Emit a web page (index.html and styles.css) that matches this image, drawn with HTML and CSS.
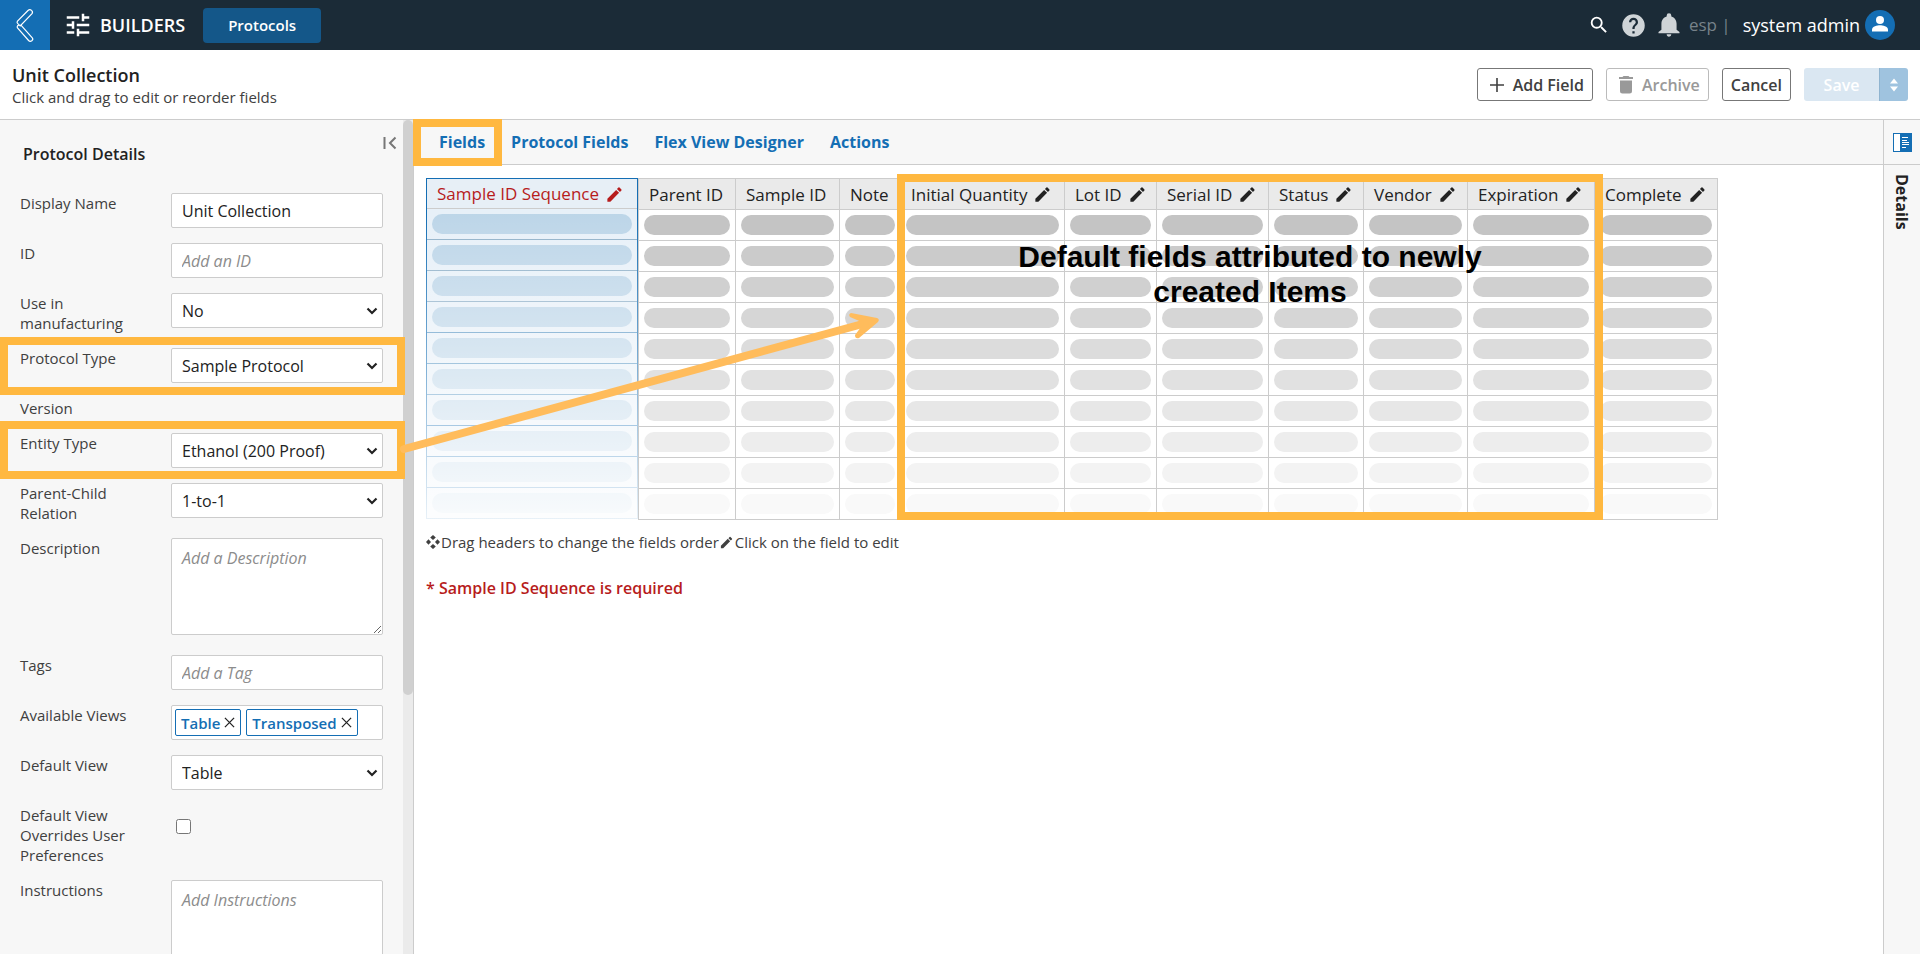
FILE: index.html
```html
<!DOCTYPE html>
<html lang="en">
<head>
<meta charset="utf-8">
<title>Builders - Unit Collection</title>
<link rel="stylesheet" href="styles.css">
</head>
<body>
<svg class="sprite" aria-hidden="true">
  <symbol id="pencil" viewBox="0 0 24 24"><path d="M3 17.25V21h3.75L17.8 9.94l-3.75-3.75L3 17.25zM20.7 7.04a1 1 0 0 0 0-1.41l-2.33-2.34a1 1 0 0 0-1.42 0l-1.83 1.83 3.75 3.75 1.83-1.83z"/></symbol>
  <symbol id="cross" viewBox="0 0 12 12"><path d="M1 1l10 10M11 1L1 11" fill="none" stroke="currentColor" stroke-width="1.4"/></symbol>
</svg>

<header class="topbar">
  <button class="back" aria-label="Back">
    <svg width="50" height="50" viewBox="0 0 50 50" fill="none" stroke="#fff" stroke-width="1.2"><path d="M28 10.500L17.500 21.200Q16.600 22.300 17.500 23.300L20.200 26 32 13.600Q33.200 11.800 31.500 10.400 29.800 8.800 28 10.500ZM20.500 24.600L32.300 37.800Q33.500 39.200 31.800 40.800 30 42 28.600 40.500L17.500 28Q16.800 27 17.500 26L19 24.500"/></svg>
  </button>
  <svg class="tune" width="30" height="30" viewBox="0 0 24 24"><path d="M3 17v2h6v-2H3zM3 5v2h10V5H3zm10 16v-2h8v-2h-8v-2h-2v6h2zM7 9v2H3v2h4v2h2V9H7zm14 4v-2H11v2h10zm-6-4h2V7h4V5h-4V3h-2v6z"/></svg>
  <h1 class="app">BUILDERS</h1>
  <button class="module">Protocols</button>
  <div class="account">
    <button class="icon" aria-label="Search"><svg width="22" height="22" viewBox="0 0 24 24" fill="#fff"><path d="M15.5 14h-.79l-.28-.27A6.470 6.470 0 0 0 16 9.500 6.500 6.500 0 1 0 9.500 16c1.610 0 3.090-.590 4.230-1.570l.27.28v.79l5 4.990L20.490 19l-4.990-5zm-6 0A4.500 4.500 0 1 1 14 9.500 4.490 4.490 0 0 1 9.500 14z"/></svg></button>
    <button class="icon help" aria-label="Help"><svg width="27" height="27" viewBox="0 0 24 24"><path d="M12 2a10 10 0 1 0 0 20 10 10 0 0 0 0-20zm1 17h-2v-2h2v2zm2.070-7.750l-.9.920C13.450 12.900 13 13.500 13 15h-2v-.5c0-1.100.450-2.100 1.170-2.830l1.240-1.260c.370-.360.590-.860.590-1.410a2 2 0 1 0-4 0H8a4 4 0 1 1 8 0c0 .880-.360 1.680-.930 2.250z"/></svg></button>
    <button class="icon bell" aria-label="Notifications"><svg width="28" height="28" viewBox="0 0 24 24"><path d="M12 22a2 2 0 0 0 2-2h-4c0 1.100.890 2 2 2zm6.500-6v-5c0-3.070-1.640-5.640-4.500-6.320V4a2 2 0 0 0-4 0v.68C7.130 5.360 5.500 7.920 5.500 11v5L3 18v1h18v-1l-2.500-2z"/></svg></button>
    <span class="tenant">esp |</span>
    <a class="user" href="#">system admin</a>
    <svg width="30" height="30" viewBox="0 0 30 30"><circle cx="15" cy="15" r="15" fill="#146eb4"/><circle cx="15" cy="10" r="4" fill="#fff"/><path d="M7 21.500v-2c0-3 5.300-4.300 8-4.300s8 1.300 8 4.300v2z" fill="#fff"/></svg>
  </div>
</header>

<section class="titlebar">
  <div>
    <h2>Unit Collection</h2>
    <p>Click and drag to edit or reorder fields</p>
  </div>
  <div class="actions">
    <button class="btn add"><svg width="14" height="14" viewBox="0 0 14 14"><path d="M7 0v14M0 7h14" stroke="currentColor" stroke-width="1.600"/></svg>Add Field</button>
    <button class="btn archive" disabled><svg width="14" height="18" viewBox="0 0 14 18" fill="currentColor"><path d="M1 4.500h12V15a2.500 2.500 0 0 1-2.500 2.500h-7A2.500 2.500 0 0 1 1 15zM0 1h3.500l1-1h5l1 1H14v2H0z"/></svg>Archive</button>
    <button class="btn">Cancel</button>
    <div class="save">
      <button class="save-main" disabled>Save</button>
      <button class="save-more" aria-label="More save options" disabled><svg width="8" height="14" viewBox="0 0 8 14" fill="#fff"><path d="M4 0.500l4 5H0zM4 13.500l-4-5h8z"/></svg></button>
    </div>
  </div>
</section>

<div class="workspace">
  <aside class="sidebar">
    <form class="details">
      <div class="details-head">
        <h3>Protocol Details</h3>
        <button type="button" class="collapse" aria-label="Collapse panel"><svg width="14" height="14" viewBox="0 0 14 14" fill="none" stroke="#777" stroke-width="2"><path d="M1.500 1v12M12.500 1.500L7 7l5.500 5.500"/></svg></button>
      </div>
      <div class="row"><label for="name">Display Name</label><input id="name" type="text" value="Unit Collection"></div>
      <div class="row"><label for="pid">ID</label><input id="pid" type="text" placeholder="Add an ID"></div>
      <div class="row"><label for="mfg">Use in manufacturing</label><select id="mfg"><option>No</option></select></div>
      <div class="row"><label for="ptype">Protocol Type</label><select id="ptype"><option>Sample Protocol</option></select></div>
      <div class="row"><span>Version</span></div>
      <div class="row"><label for="etype">Entity Type</label><select id="etype"><option>Ethanol (200 Proof)</option></select></div>
      <div class="row"><label for="rel">Parent-Child Relation</label><select id="rel"><option>1-to-1</option></select></div>
      <div class="row tall"><label for="desc">Description</label><textarea id="desc" placeholder="Add a Description"></textarea></div>
      <div class="row"><label for="tags">Tags</label><input id="tags" type="text" placeholder="Add a Tag"></div>
      <div class="row"><span>Available Views</span>
        <div class="chips">
          <button type="button" class="chip">Table<svg width="11" height="11"><use href="#cross"/></svg></button>
          <button type="button" class="chip">Transposed<svg width="11" height="11"><use href="#cross"/></svg></button>
        </div>
      </div>
      <div class="row"><label for="view">Default View</label><select id="view"><option>Table</option></select></div>
      <div class="row"><label for="over">Default View Overrides User Preferences</label><input id="over" type="checkbox"></div>
      <div class="row tall"><label for="instr">Instructions</label><textarea id="instr" placeholder="Add Instructions"></textarea></div>
    </form>
    <div class="scroll"><div class="thumb"></div></div>
  </aside>

  <main class="main">
    <nav class="tabs">
      <a href="#">Fields</a><a href="#">Protocol Fields</a><a href="#">Flex View Designer</a><a href="#">Actions</a>
    </nav>
    <div class="content">
      <div class="tables" id="tables"></div>
      <p class="hint"><svg width="14" height="14" viewBox="0 0 14 14" fill="currentColor"><path d="M7 0l2.800 2.500L7 5 4.200 2.500zM7 9l2.800 2.500L7 14l-2.800-2.500zM2.500 4.200L5 7 2.500 9.800 0 7zM11.500 4.200L14 7l-2.500 2.800L9 7z"/></svg>Drag headers to change the fields order<svg width="15" height="15"><use href="#pencil"/></svg>Click on the field to edit</p>
      <p class="error">* Sample ID Sequence is required</p>
    </div>
  </main>

  <aside class="rail">
    <button class="rail-toggle" aria-label="Toggle details"><svg width="19" height="19" viewBox="0 0 19 19"><rect x=".5" y=".5" width="18" height="18" fill="#fff" stroke="#146eb4"/><path d="M7 0h12v19H7z" fill="#146eb4"/><path d="M9 4.500h6M9 7.500h5M9 9.500h7M9 11.500h7M9 14.500h4" stroke="#fff"/></svg></button>
    <span>Details</span>
  </aside>
</div>

<div class="annotations">
  <div class="mark mark-tab"></div>
  <div class="mark mark-protocol"></div>
  <div class="mark mark-entity"></div>
  <div class="mark mark-fields">Default fields attributed to newly created Items</div>
  <svg class="arrow" width="490" height="150" viewBox="0 0 490 150"><path d="M4 139L470 12" fill="none" stroke="#ffbc5c" stroke-width="8" stroke-linecap="round"/><path d="M451 3Q448 4 450 7L464 13 455 25Q455 29 459 28L478 12Q480 9 477 8Z" fill="#ffbc5c"/></svg>
</div>

<script src="script.js"></script>
</body>
</html>
```
FILE: styles.css
```css
* { box-sizing: border-box; }
body {
  margin: 0;
  height: 100vh;
  display: flex;
  flex-direction: column;
  position: relative;
  overflow: hidden;
  background: #fff;
  color: #404040;
  font-family: "Open Sans", sans-serif;
  font-size: 15px;
  line-height: 20px;
}
h1, h2, h3, p { margin: 0; }
button, input, select, textarea { font: inherit; color: inherit; margin: 0; }
button { padding: 0; border: 0; background: none; }
svg { display: block; flex: none; }
a { text-decoration: none; }
.sprite { position: absolute; width: 0; height: 0; }

.topbar {
  flex: none;
  height: 50px;
  display: flex;
  align-items: center;
  background: #1b2b37;
  color: #fff;
}
.back { width: 50px; height: 50px; background: #146eb4; }
.tune { margin-left: 13px; fill: #fff; }
.app { margin-left: 7px; font-size: 18px; font-weight: 600; }
.module {
  margin-left: 18px;
  width: 118px;
  height: 35px;
  border-radius: 4px;
  background: #145789;
  font-weight: 600;
}
.account { margin-left: auto; padding-right: 25px; display: flex; align-items: center; font-size: 17px; }
.help, .bell { fill: #cfd4d7; }
.help { margin-left: 10px; }
.bell { margin-left: 8px; }
.tenant { margin-left: 6px; color: #77828a; }
.user { margin: 0 5px 0 12px; color: #fff; font-size: 18px; }

.titlebar {
  flex: none;
  height: 70px;
  padding: 0 12px;
  display: flex;
  align-items: center;
  justify-content: space-between;
  border-bottom: 1px solid #ccc;
}
.titlebar h2 { font-size: 18px; line-height: 24px; font-weight: 600; color: #222; }
.actions { display: flex; gap: 13px; }
.btn {
  height: 33px;
  padding: 0 8px;
  display: flex;
  align-items: center;
  border: 1px solid #777;
  border-radius: 3px;
  background: #fff;
  font-size: 16px;
  font-weight: 600;
}
.add { padding-left: 12px; gap: 9px; }
.archive { padding-left: 12px; gap: 9px; color: #999; border-color: #bbb; }
.save { display: flex; color: #fff; font-size: 16px; font-weight: 600; }
.save-main { width: 75px; height: 33px; background: #dae7f2; border-radius: 3px 0 0 3px; }
.save-more {
  width: 29px;
  display: grid;
  place-items: center;
  background: #9fc3df;
  border-left: 1px solid #8fb4d0;
  border-radius: 0 3px 3px 0;
}

.workspace { flex: 1; min-height: 0; display: flex; }
.sidebar { flex: none; width: 414px; display: flex; overflow: hidden; background: #f7f7f7; border-right: 1px solid #ccc; }
.details { flex: 1; padding: 0 20px; display: flex; flex-direction: column; gap: 15px; }
.details-head { height: 58px; flex: none; display: flex; justify-content: space-between; }
.details-head h3 { padding: 24px 0 0 3px; font-size: 16px; font-weight: 600; color: #222; }
.collapse { height: 14px; margin: 16px -14px 0 0; }
.row { flex: none; display: grid; grid-template-columns: 131px 1fr; gap: 20px; align-items: start; }
.row.tall { padding-bottom: 5px; }
.row input[type=text], .row select, .row textarea, .chips {
  width: 100%;
  height: 35px;
  padding: 0 10px;
  border: 1px solid #ccc;
  border-radius: 2px;
  background: #fff;
  color: #222;
  font-size: 16px;
}
.row select {
  appearance: none;
  background: #fff url("data:image/svg+xml,%3Csvg xmlns='http://www.w3.org/2000/svg' width='12' height='8'%3E%3Cpath d='M1.500 1.500L6 6l4.500-4.500' fill='none' stroke='%23222' stroke-width='2.200'/%3E%3C/svg%3E") no-repeat right 4px center;
}
.row textarea { display: block; height: 97px; padding: 9px 10px; }
.row ::placeholder { color: #8c8c8c; font-style: italic; opacity: 1; }
.row input[type=checkbox] { width: 15px; height: 15px; margin: 14px 0 0 5px; }
.row .chips { padding: 3px; display: flex; gap: 5px; }
.chip {
  height: 27px;
  padding: 0 5px;
  display: flex;
  align-items: center;
  gap: 4px;
  border: 1px solid #146eb4;
  border-radius: 2px;
  color: #146eb4;
  font-size: 15px;
  font-weight: 600;
}
.chip svg { color: #222; }
.scroll { width: 10px; background: #ebebeb; }
.thumb { height: 69%; border-radius: 5px; background: #d0d0d0; }

.main { flex: 1; min-width: 0; }
.tabs {
  height: 45px;
  padding-left: 25px;
  display: flex;
  align-items: center;
  gap: 26px;
  background: #f7f7f7;
  border-bottom: 1px solid #ccc;
}
.tabs a { color: #146eb4; font-size: 16px; font-weight: 700; }
.content { padding: 13px 12px; }
.tables { display: flex; align-items: flex-start; }
table { border-collapse: separate; border-spacing: 0; table-layout: fixed; }
th {
  height: 31px;
  padding: 1px 10px 0;
  border-bottom: 1px solid #ccc;
  background: #eaeaea;
  color: #222;
  font-size: 17px;
  font-weight: 400;
  text-align: left;
  white-space: nowrap;
}
.label { display: flex; align-items: center; gap: 6px; fill: currentColor; }
td { height: 31px; padding: 5px; border-bottom: 1px solid #ccc; }
.pill { height: 20px; border-radius: 10px; background: #c4c4c4; }
.fields { width: 1080px; border: solid #ccc; border-width: 1px 0 0 1px; }
.fields th, .fields td { border-right: 1px solid #ccc; }
.picked { width: 212px; position: relative; border: solid #146eb4; border-width: 1px 1px 0; }
.picked th { height: 30px; background: #e7eff6; color: #b71c1c; }
.picked td { border-color: #8fb0c8; background: #e7f0f8; }
.picked tr:nth-child(n+5) td { border-color: #5b97c4; }
.picked tr:nth-child(n+8) td { border-color: #146eb4; }
.picked .pill { background: #bcd5e8; }
.picked::after {
  content: "";
  position: absolute;
  inset: 31px -1px 0;
  background: linear-gradient(#fff0, #ffffffe6);
}
.hint { margin-top: 12px; display: flex; align-items: center; }
.hint svg { margin-right: 1px; fill: currentColor; }
.error { margin-top: 26px; color: #b71c1c; font-size: 16px; font-weight: 600; }

.rail { flex: none; width: 37px; border-left: 1px solid #ccc; background: #f7f7f7; }
.rail-toggle { width: 100%; height: 45px; display: grid; place-items: center; border-bottom: 1px solid #ccc; }
.rail span { display: block; margin: 9px 0 0 8px; writing-mode: vertical-rl; font-size: 16px; font-weight: 700; color: #222; }

.annotations { position: absolute; inset: 0; pointer-events: none; }
.mark { position: absolute; border: 8px solid #ffb840; }
.mark-tab { left: 413px; top: 119px; width: 89px; height: 47px; }
.mark-protocol { left: 0; top: 337px; width: 405px; height: 58px; }
.mark-entity { left: 0; top: 421px; width: 405px; height: 58px; }
.mark-fields {
  left: 897px;
  top: 174px;
  width: 706px;
  height: 346px;
  padding: 57px 100px 0;
  color: #000;
  font: 700 30px/35px "Liberation Sans", Arial, sans-serif;
  text-align: center;
}
.arrow { position: absolute; left: 400px; top: 310px; }
```
FILE: script.js
```js
const pencil = '<svg width="19" height="19"><use href="#pencil"/></svg>';
const shades = [196, 203, 208, 214, 220, 225, 231, 237, 243, 249];
const columns = [
  ["Parent ID", 97, false], ["Sample ID", 104, false], ["Note", 61, false],
  ["Initial Quantity", 164, true], ["Lot ID", 92, true], ["Serial ID", 112, true],
  ["Status", 95, true], ["Vendor", 104, true], ["Expiration", 127, true], ["Complete", 123, true]
];

function head(name, editable) {
  return `<th><span class="label">${name}${editable ? pencil : ""}</span></th>`;
}

const picked = `<table class="picked"><tr>${head("Sample ID Sequence", true)}</tr>` +
  shades.map(() => '<tr><td><div class="pill"></div></td></tr>').join("") + "</table>";

const fields = '<table class="fields"><colgroup>' +
  columns.map(c => `<col style="width:${c[1]}px">`).join("") + "</colgroup><tr>" +
  columns.map(c => head(c[0], c[2])).join("") + "</tr>" +
  shades.map(s => "<tr>" + columns.map(() =>
    `<td><div class="pill" style="background:rgb(${s},${s},${s})"></div></td>`).join("") + "</tr>").join("") +
  "</table>";

document.getElementById("tables").innerHTML = picked + fields;
```
